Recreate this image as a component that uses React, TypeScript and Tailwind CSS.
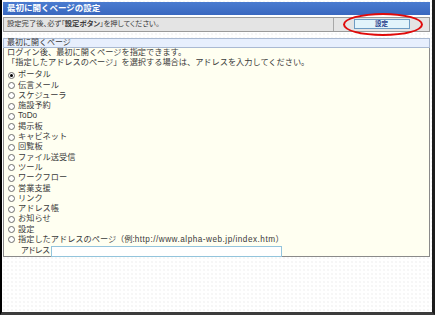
const pages = [
  'ポータル',
  '伝言メール',
  'スケジューラ',
  '施設予約',
  'ToDo',
  '掲示板',
  'キャビネット',
  '回覧板',
  'ファイル送受信',
  'ツール',
  'ワークフロー',
  '営業支援',
  'リンク',
  'アドレス帳',
  'お知らせ',
  '設定',
];

function Radio({ checked }: { checked: boolean }) {
  return (
    <span className="w-[7px] h-[7px] rounded-full border border-[#6e6e6e] bg-white flex items-center justify-center shrink-0">
      {checked && <span className="w-[3px] h-[3px] rounded-full bg-black" />}
    </span>
  );
}

export default function App() {
  return (
    <div className="w-[436px] h-[316px] bg-white overflow-hidden font-['Liberation_Sans','Noto_Sans_CJK_JP',sans-serif] text-[#3a3a3a]">
      <div className="w-[435px] h-[315px] border-l-2 border-l-black border-r-[3px] border-r-[#1c1c1c] border-b-[3px] border-b-[#3c3c3c] pt-[2px] pl-px pr-[2px] bg-[radial-gradient(#ececec_0.6px,transparent_0.8px)] bg-[size:4px_4px]">
        <div className="h-[13px] bg-gradient-to-b from-[#4a7bd0] to-[#3a68bf] text-white font-bold text-[8.5px] leading-[13px] pl-[4px]">
          最初に開くページの設定
        </div>

        <div className="mt-[2px] h-[14.5px] flex border border-[#9a9a9a] bg-[#e4e4e4] text-[7.3px] [font-feature-settings:'palt']">
          <div className="flex-1 pl-[3px] flex items-center">
            設定完了後、必ず「<span className="font-bold">設定ボタン</span>」を押してください。
          </div>
          <div className="w-[96px] border-l border-[#a8a8a8] flex items-center justify-center relative">
            <button className="w-[56px] h-[10px] bg-[#e2f4fb] border border-[#6d9cc3] text-[6.5px] leading-[8px] font-bold text-[#1d3a8a]">
              設定
            </button>
            <span className="absolute left-[9px] top-[-5px] w-[80px] h-[23px] rounded-[50%] border-2 border-[#e00a0a]" />
          </div>
        </div>

        <div className="mt-[6px] h-[10px] border border-[#a9b9d2] bg-[#e7effd] text-[8px] leading-[8px] pl-[3px]">
          最初に開くページ
        </div>
        <div className="h-[209.5px] border border-t-0 border-[#8a8a8a] bg-[#fffff1] text-[8.2px] leading-[10.3px] pl-[3px]">
          <p>ログイン後、最初に開くページを指定できます。</p>
          <p>「指定したアドレスのページ」を選択する場合は、アドレスを入力してください。</p>
          <ul className="mt-[2px] leading-[10px]">
            {pages.map((p, i) => (
              <li key={p} className="h-[10.3px] flex items-center gap-[3px] pl-px">
                <Radio checked={i === 0} />
                <span>{p}</span>
              </li>
            ))}
            <li className="h-[10.3px] flex items-center gap-[3px] pl-px">
              <Radio checked={false} />
              <span>
                指定したアドレスのページ（例:
                <span className="tracking-[0.5px]">http://www.alpha-web.jp/index.htm</span>）
              </span>
            </li>
          </ul>
          <div className="flex items-center h-[11px] pl-[14px] mt-[0.5px] leading-[10px]">
            <span className="w-[30px] shrink-0 whitespace-nowrap [font-feature-settings:'palt']">アドレス</span>
            <input className="w-[231px] h-[11px] border border-[#93c4dc] bg-white outline-none" />
          </div>
        </div>
      </div>
    </div>
  );
}
